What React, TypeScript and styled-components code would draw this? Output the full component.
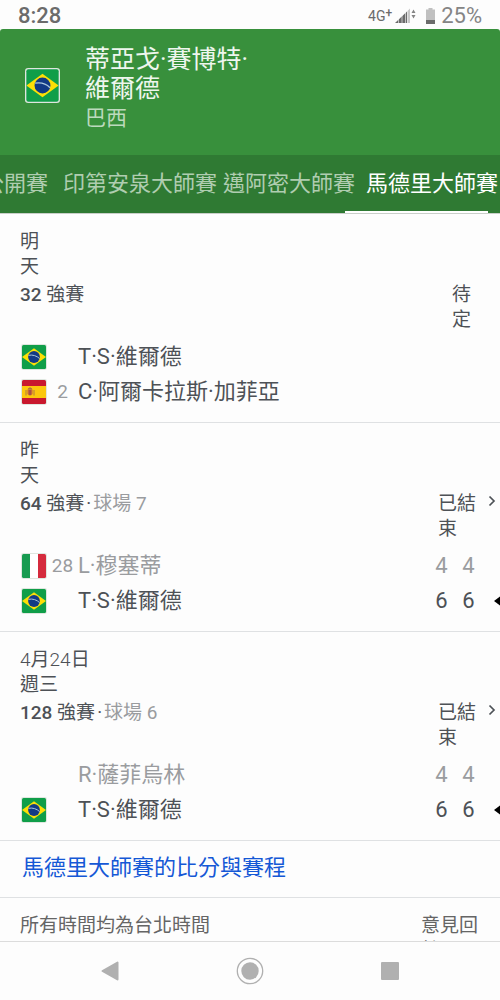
import React from 'react';
import styled, { createGlobalStyle } from 'styled-components';

const GlobalStyle = createGlobalStyle`
  * { box-sizing: border-box; }
  body {
    margin: 0;
    background: #fdfdfd;
    color: #4d5156;
    font-family: Roboto, "Noto Sans CJK TC", sans-serif;
  }
  button { font: inherit; border: 0; padding: 0; background: none; color: inherit; }
`;

const Screen = styled.div`
  display: flex;
  flex-direction: column;
  height: 100vh;
  overflow: hidden;
`;

const StatusBar = styled.div`
  display: flex;
  align-items: center;
  height: 29px;
  flex: none;
  padding: 2px 18px 0 18px;
  color: #6b6b6b;
  font-size: 22px;
  line-height: 26px;
`;

const Clock = styled.time`
  flex: 1;
  font-weight: 500;
`;

const Network = styled.span`
  display: flex;
  align-items: flex-start;
  margin-right: 3px;
  font-size: 14px;
  line-height: 20px;
`;

const NetworkPlus = styled.span`
  font-size: 12px;
  font-weight: 500;
  line-height: 14px;
`;

const StatusIcons = styled.span`
  display: flex;
  gap: 9px;
`;

const BatteryLevel = styled.span`
  margin-left: 6px;
  color: #858585;
`;

const Content = styled.main`
  flex: 1;
  min-height: 0;
  overflow-y: auto;
  scrollbar-width: none;
`;

const Header = styled.header`
  display: flex;
  align-items: flex-start;
  gap: 25px;
  padding: 16px 25px 21px;
  background: #38903c;
  border-radius: 3px 3px 0 0;
`;

const HeaderFlag = styled.div`
  display: flex;
  margin-top: 23px;
`;

const Title = styled.h1`
  margin: 0;
  color: #eef6ee;
  font-size: 25px;
  font-weight: 400;
  line-height: 29px;
`;

const Country = styled.p`
  margin: 0;
  color: #bcdabd;
  font-size: 21px;
  line-height: 31px;
`;

const TabBar = styled.nav`
  display: flex;
  flex-direction: column;
  align-items: flex-end;
  overflow: hidden;
  background: #2f7a33;
  border-bottom: 1px solid #c9cfc9;
`;

const TabRow = styled.div`
  display: flex;
  justify-content: flex-end;
`;

const Tab = styled.button<{ $active?: boolean; $gap: number }>`
  flex: none;
  height: 56px;
  padding-top: 2px;
  margin-right: ${(p) => p.$gap}px;
  color: ${(p) => (p.$active ? '#fff' : '#afcdb0')};
  font-size: 22px;
  line-height: 30px;
  white-space: nowrap;
`;

const TabIndicator = styled.div`
  width: 143px;
  height: 2px;
  margin-right: 12px;
  background: #fff;
`;

const MatchCard = styled.section`
  padding: 15px 0 13px;
  border-bottom: 1px solid #dfe1e3;
`;

const MatchDate = styled.div<{ $narrow?: boolean }>`
  width: ${(p) => (p.$narrow ? 20 : 72)}px;
  margin-left: 20px;
  font-size: 19px;
  line-height: 25px;
`;

const Digits = styled.span<{ $strong?: boolean }>`
  font-weight: ${(p) => (p.$strong ? 500 : 300)};
`;

const MatchInfo = styled.div`
  display: flex;
  align-items: flex-start;
  min-height: 50px;
  margin: 3px 0 7px 20px;
  font-size: 19px;
  line-height: 25px;
`;

const Round = styled.h2`
  flex: 1;
  margin: 0;
  font-size: 19px;
  font-weight: 400;
`;

const Court = styled.span`
  color: #9a9c9f;
`;

const Dot = styled.span`
  padding: 0 2px;
  color: #4d5156;
`;

const State = styled.span<{ $pending?: boolean }>`
  width: ${(p) => (p.$pending ? 20 : 38)}px;
  margin-right: ${(p) => (p.$pending ? 28 : 12)}px;
`;

const DetailButton = styled.button`
  display: flex;
  width: 12px;
  padding-top: 4px;
`;

const Players = styled.table`
  width: 100%;
  table-layout: fixed;
  border-collapse: collapse;
`;

const PlayerRow = styled.tr<{ $lost?: boolean }>`
  height: 35px;
  color: ${(p) => (p.$lost ? '#9a9c9f' : '#4d5156')};
  font-size: 22px;
  line-height: 30px;
`;

const Cell = styled.td<{ $width?: number; $align?: string }>`
  width: ${(p) => (p.$width ? `${p.$width}px` : 'auto')};
  padding: 0;
  text-align: ${(p) => p.$align ?? 'left'};
  svg { display: block; margin-left: auto; }
`;

const Seed = styled.span`
  color: #9a9c9f;
  font-size: 19px;
`;

const MoreRow = styled.div`
  padding: 12px 22px 14px;
  border-bottom: 1px solid #dfe1e3;
`;

const MoreLink = styled.a`
  color: #1558d6;
  font-size: 22px;
  line-height: 30px;
  text-decoration: none;
`;

const Footer = styled.footer`
  display: flex;
  justify-content: space-between;
  padding: 15px 20px;
  color: #656565;
  font-size: 19px;
  line-height: 25px;
`;

const Feedback = styled.a`
  width: 59px;
  color: inherit;
  text-decoration: none;
`;

const SystemNav = styled.nav`
  display: flex;
  flex: none;
  align-items: center;
  justify-content: space-between;
  height: 59px;
  padding: 0 96px;
  border-top: 1px solid #dcdcdc;
`;

const NavButton = styled.button`
  display: flex;
  justify-content: center;
  width: 28px;
`;

type CountryCode = 'br' | 'es' | 'it';

const Flag = ({ country, size = 26 }: { country: CountryCode; size?: number }) => (
  <svg width={size} height={size} viewBox="0 0 26 26" role="img" aria-label={country}>
    <clipPath id={`round-${country}`}>
      <rect x="1" y="1" width="24" height="24" rx="1.5" />
    </clipPath>
    <rect width="26" height="26" rx="2.400" fill="#dfe6df" />
    <g clipPath={`url(#round-${country})`}>
      {country === 'br' && (
        <>
          <rect width="26" height="26" fill="#109e49" />
          <path d="M13 4.200 25 13 13 21.800 1 13Z" fill="#fddf06" />
          <circle cx="13" cy="13" r="5.900" fill="#123a85" />
          <path d="M7.500 11.300c4.200-.8 8.300.5 11.100 3.300" fill="none" stroke="#a9c6dc" strokeWidth="1" />
        </>
      )}
      {country === 'es' && (
        <>
          <rect width="26" height="26" fill="#c9182e" />
          <rect y="7" width="26" height="12" fill="#fcc70d" />
          <path d="M6.500 10.500h5v4.500q-2.500 3-5 0Z" fill="#c4683a" />
          <path d="M7 10q2-2.500 4 0ZM5 11v5.500M13 11v5.500" fill="#b8502f" stroke="#b07a45" strokeWidth="1" />
          <path d="M9 11v5" stroke="#8a3c50" strokeWidth="1" />
        </>
      )}
      {country === 'it' && (
        <>
          <rect width="26" height="26" fill="#fff" />
          <rect width="9" height="26" fill="#179b50" />
          <rect x="17" width="9" height="26" fill="#d52b3d" />
        </>
      )}
    </g>
  </svg>
);

interface Player {
  name: string;
  country?: CountryCode;
  seed?: number;
  scores?: number[];
  lost?: boolean;
  won?: boolean;
}

interface Match {
  id: string;
  date: React.ReactNode;
  narrow?: boolean;
  round: number;
  court?: string;
  players: Player[];
}

const matches: Match[] = [
  {
    id: 'r32',
    date: '明天',
    narrow: true,
    round: 32,
    players: [
      { name: 'T·S·維爾德', country: 'br' },
      { name: 'C·阿爾卡拉斯·加菲亞', country: 'es', seed: 2 },
    ],
  },
  {
    id: 'r64',
    date: '昨天',
    narrow: true,
    round: 64,
    court: '球場 7',
    players: [
      { name: 'L·穆塞蒂', country: 'it', seed: 28, scores: [4, 4], lost: true },
      { name: 'T·S·維爾德', country: 'br', scores: [6, 6], won: true },
    ],
  },
  {
    id: 'r128',
    date: (
      <>
        <Digits>4</Digits>月<Digits>24</Digits>日週三
      </>
    ),
    round: 128,
    court: '球場 6',
    players: [
      { name: 'R·薩菲烏林', scores: [4, 4], lost: true },
      { name: 'T·S·維爾德', country: 'br', scores: [6, 6], won: true },
    ],
  },
];

const tabs = [
  { label: '公開賽', gap: 15 },
  { label: '印第安泉大師賽', gap: 6 },
  { label: '邁阿密大師賽', gap: 11 },
  { label: '馬德里大師賽', gap: 2, active: true },
];

const MatchView = ({ match }: { match: Match }) => (
  <MatchCard>
    <MatchDate $narrow={match.narrow}>{match.date}</MatchDate>
    <MatchInfo>
      <Round>
        <Digits $strong>{match.round}</Digits> 強賽
        {match.court && (
          <Court>
            <Dot>·</Dot>
            {match.court}
          </Court>
        )}
      </Round>
      <State $pending={!match.court}>{match.court ? '已結束' : '待定'}</State>
      {match.court && (
        <DetailButton aria-label="比賽詳情">
          <svg width="8" height="12" viewBox="0 0 8 12">
            <path d="M1.500 1.500 6 6 1.500 10.500" fill="none" stroke="#4d5156" strokeWidth="1.700" />
          </svg>
        </DetailButton>
      )}
    </MatchInfo>
    <Players>
      <tbody>
        {match.players.map((p) => (
          <PlayerRow key={p.name} $lost={p.lost}>
            <Cell $width={47}>{p.country && <Flag country={p.country} />}</Cell>
            <Cell $width={31} $align="center">
              <Seed>{p.seed}</Seed>
            </Cell>
            <Cell>{p.name}</Cell>
            <Cell $width={27} $align="center">{p.scores?.[0]}</Cell>
            <Cell $width={27} $align="center">{p.scores?.[1]}</Cell>
            <Cell $width={18}>
              {p.won && (
                <svg width="6" height="10" viewBox="0 0 6 10">
                  <path d="M6 .5V9.500L0 5Z" fill="#000" />
                </svg>
              )}
            </Cell>
          </PlayerRow>
        ))}
      </tbody>
    </Players>
  </MatchCard>
);

export default function App() {
  return (
    <Screen lang="zh-Hant">
      <GlobalStyle />
      <StatusBar>
        <Clock>8:28</Clock>
        <Network>
          4G<NetworkPlus>+</NetworkPlus>
        </Network>
        <StatusIcons>
          <svg width="22" height="16" viewBox="0 0 22 16">
            <path d="M0 15 12 3.500V15Z" fill="#6b6b6b" />
            <path d="M12.500 3 15 .5V15h-2.500Z" fill="#c8c8c8" />
            <path d="M3.500 8v8M7 5v11M10.500 2v14" stroke="#fdfdfd" strokeWidth=".6" />
            <path d="M16.500 5 18.500 1.500 20.500 5ZM16.500 7 18.500 10.500 20.500 7Z" fill="#858585" />
          </svg>
          <svg width="9" height="16" viewBox="0 0 9 16">
            <path d="M2.500 0h4v1.500H9V16H0V1.500h2.500Z" fill="#c0c0c0" />
            <path d="M0 12h9v4H0Z" fill="#6b6b6b" />
          </svg>
        </StatusIcons>
        <BatteryLevel>25%</BatteryLevel>
      </StatusBar>
      <Content>
        <Header>
          <HeaderFlag>
            <Flag country="br" size={35} />
          </HeaderFlag>
          <div>
            <Title>
              蒂亞戈·賽博特·
              <br />
              維爾德
            </Title>
            <Country>巴西</Country>
          </div>
        </Header>
        <TabBar>
          <TabRow>
            {tabs.map((t) => (
              <Tab key={t.label} $gap={t.gap} $active={t.active}>
                {t.label}
              </Tab>
            ))}
          </TabRow>
          <TabIndicator />
        </TabBar>
        {matches.map((m) => (
          <MatchView key={m.id} match={m} />
        ))}
        <MoreRow>
          <MoreLink href="#scores">馬德里大師賽的比分與賽程</MoreLink>
        </MoreRow>
        <Footer>
          <span>所有時間均為台北時間</span>
          <Feedback href="#feedback">意見回饋</Feedback>
        </Footer>
      </Content>
      <SystemNav>
        <NavButton aria-label="返回">
          <svg width="18" height="20" viewBox="0 0 18 20">
            <path d="M1.500 10 16.500 1.500v17Z" fill="#b0b0b0" stroke="#b0b0b0" strokeWidth="2" strokeLinejoin="round" />
          </svg>
        </NavButton>
        <NavButton aria-label="主畫面">
          <svg width="28" height="28" viewBox="0 0 28 28">
            <circle cx="14" cy="14" r="12.700" fill="none" stroke="#b0b0b0" strokeWidth="1.300" />
            <circle cx="14" cy="14" r="8.700" fill="#b0b0b0" />
          </svg>
        </NavButton>
        <NavButton aria-label="最近使用">
          <svg width="18" height="18" viewBox="0 0 18 18">
            <rect width="18" height="18" rx="1" fill="#b0b0b0" />
          </svg>
        </NavButton>
      </SystemNav>
    </Screen>
  );
}
